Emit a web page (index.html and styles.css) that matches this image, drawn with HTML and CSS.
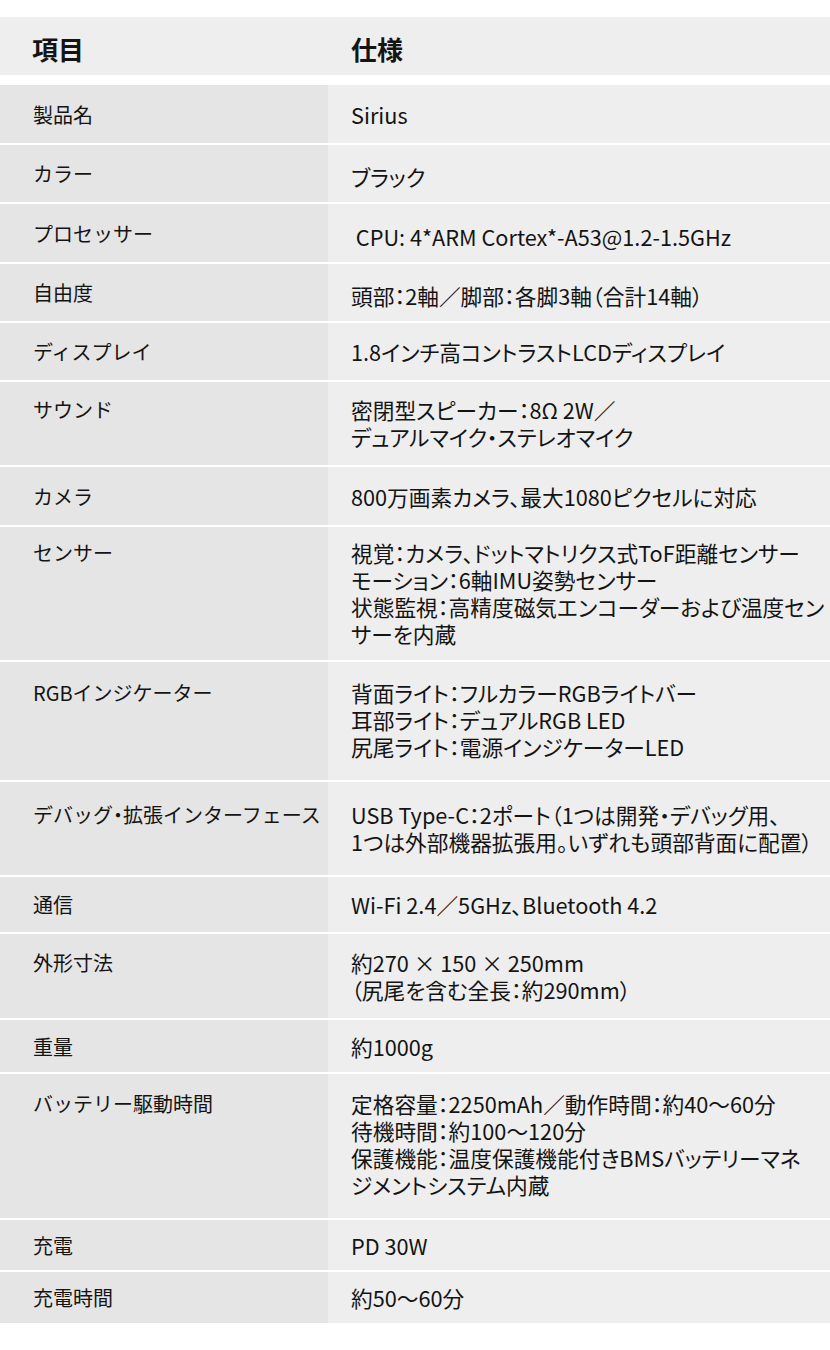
FILE: index.html
```html
<!DOCTYPE html>
<html lang="ja">
<head>
<meta charset="utf-8">
<link rel="stylesheet" href="styles.css">
</head>
<body>
<div class="spec">
  <div class="head">
    <div class="hcell hl">項目</div>
    <div class="hcell hr">仕様</div>
  </div>
  <div class="rows">
    <div class="row pa"><div class="k">製品名</div><div class="v">Sirius</div></div>
    <div class="row pb low"><div class="k">カラー</div><div class="v">ブラック</div></div>
    <div class="row pa low"><div class="k">プロセッサー</div><div class="v">&nbsp;CPU: 4*ARM Cortex*-A53@1.2-1.5GHz</div></div>
    <div class="row pb low"><div class="k">自由度</div><div class="v">頭部：2軸／脚部：各脚3軸（合計14軸）</div></div>
    <div class="row pb"><div class="k">ディスプレイ</div><div class="v">1.8インチ高コントラストLCDディスプレイ</div></div>
    <div class="row psound"><div class="k">サウンド</div><div class="v">密閉型スピーカー：8Ω 2W／<br>デュアルマイク・ステレオマイク</div></div>
    <div class="row pa"><div class="k">カメラ</div><div class="v">800万画素カメラ、最大1080ピクセルに対応</div></div>
    <div class="row psensor"><div class="k">センサー</div><div class="v">視覚：カメラ、ドットマトリクス式ToF距離センサー<br>モーション：6軸IMU姿勢センサー<br>状態監視：高精度磁気エンコーダーおよび温度セン<br>サーを内蔵</div></div>
    <div class="row prgb"><div class="k">RGBインジケーター</div><div class="v">背面ライト：フルカラーRGBライトバー<br>耳部ライト：デュアルRGB LED<br>尻尾ライト：電源インジケーターLED</div></div>
    <div class="row pdebug"><div class="k">デバッグ・拡張インターフェース</div><div class="v">USB Type-C：2ポート（1つは開発・デバッグ用、<br>1つは外部機器拡張用。いずれも頭部背面に配置）</div></div>
    <div class="row pc"><div class="k">通信</div><div class="v">Wi-Fi 2.4／5GHz、Bluetooth 4.2</div></div>
    <div class="row pd"><div class="k">外形寸法</div><div class="v">約270 × 150 × 250mm<br>（尻尾を含む全長：約290mm）</div></div>
    <div class="row pe"><div class="k">重量</div><div class="v">約1000g</div></div>
    <div class="row pbat"><div class="k">バッテリー駆動時間</div><div class="v">定格容量：2250mAh／動作時間：約40～60分<br>待機時間：約100～120分<br>保護機能：温度保護機能付きBMSバッテリーマネ<br>ジメントシステム内蔵</div></div>
    <div class="row pf"><div class="k">充電</div><div class="v">PD 30W</div></div>
    <div class="row pg"><div class="k">充電時間</div><div class="v">約50～60分</div></div>
  </div>
</div>
</body>
</html>
```
FILE: styles.css
```css
* { box-sizing: border-box; }
html, body { margin: 0; padding: 0; background: #fff; }
body {
  font-family: "Noto Sans CJK JP", "Noto Sans", sans-serif;
  color: #141414;
  width: 830px;
}
.spec { padding-top: 17px; }
.head {
  display: grid;
  grid-template-columns: 328px 1fr;
  background: #eeeeee;
  height: 58px;
}
.hcell {
  font-size: 26px;
  font-weight: 700;
  line-height: 54px;
  padding-top: 5px;
}
.hl { padding-left: 32px; }
.hr { padding-left: 23px; }
.rows {
  margin-top: 10px;
  display: flex;
  flex-direction: column;
  gap: 2px;
}
.row {
  display: grid;
  grid-template-columns: 328px 1fr;
  line-height: 27px;
  --shift: 0px;
}
.row.low { --shift: 3px; }
.k { padding-top: var(--pt); padding-bottom: var(--pb); }
.v {
  padding-top: calc(var(--pt) + var(--shift));
  padding-bottom: calc(var(--pb) - var(--shift));
}
.k {
  background: #e5e5e5;
  padding-left: 33px;
  font-size: 20px;
  font-feature-settings: "halt";
}
.v {
  background: #eeeeee;
  padding-left: 23px;
  padding-right: 0;
  font-size: 21.7px;
  font-feature-settings: "palt";
  white-space: nowrap;
}
.pa { --pt: 16px; --pb: 15px; }
.pb { --pt: 15px; --pb: 15px; }
.psound { --pt: 14px; --pb: 15px; }
.psensor { --pt: 12px; --pb: 13px; }
.prgb { --pt: 17px; --pb: 20px; }
.pdebug { --pt: 19px; --pb: 20px; }
.pc { --pt: 14px; --pb: 14px; }
.pd { --pt: 15px; --pb: 15px; }
.pe { --pt: 13px; --pb: 12px; }
.pbat { --pt: 16px; --pb: 20px; }
.pf { --pt: 12px; --pb: 11px; }
.pg { --pt: 12px; --pb: 12px; }
```
